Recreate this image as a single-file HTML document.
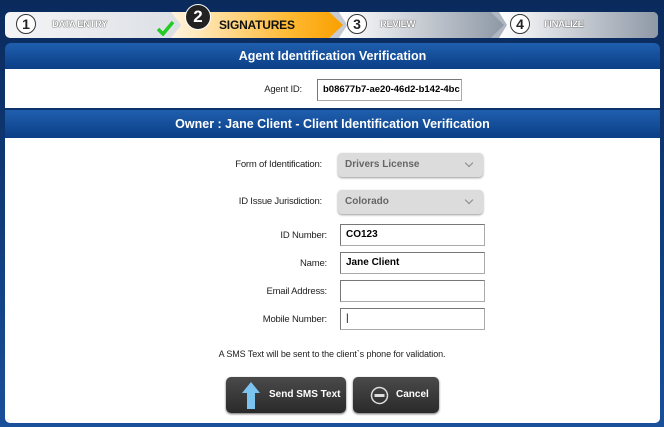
<!DOCTYPE html><html><head><style>
body{margin:0;width:664px;height:427px;background:linear-gradient(#0a2a5c,#123f80 60%,#1a4f9a);font-family:"Liberation Sans",sans-serif;position:relative;overflow:hidden}
.a{position:absolute}
.steps{left:5px;top:12px;width:653px;height:26px;border-radius:5px;background:linear-gradient(90deg,#f4f5f7,#9aa3b0);overflow:hidden}
.seg{position:absolute;top:0;height:26px}
.num{position:absolute;width:18px;height:18px;border:1.5px solid #333;border-radius:50%;background:#fff;font:bold 14px "Liberation Sans";text-align:center;line-height:18px;color:#222;top:2px}
.lab{position:absolute;top:7px;font:bold 9.5px "Liberation Sans";color:#fff;text-shadow:0 0 1px #333,0 0 1px #333;letter-spacing:-.4px}
.hdr{left:5px;width:655px;background:linear-gradient(#1f5fae,#0b3e86);color:#fff;font:bold 12.5px "Liberation Sans";text-align:center}
.white{left:5px;width:655px;background:#fff}
.lbl{position:absolute;font-size:9.5px;color:#222;text-align:right;letter-spacing:-.2px}
.inp{position:absolute;border:1px solid #aaa;border-top-color:#777;border-left-color:#777;background:#fff;font:bold 10px "Liberation Sans";line-height:20px;padding-left:5px;box-sizing:border-box;width:145px;height:22px}
.sel{position:absolute;width:145px;height:24px;border-radius:4px;background:#dcdcdc;box-shadow:0 1px 2px #999;font:bold 10px "Liberation Sans";color:#666;line-height:24px;padding-left:7px;box-sizing:border-box}
.sel:after{content:"";position:absolute;right:11px;top:7px;width:5px;height:5px;border-right:1px solid #888;border-bottom:1px solid #888;transform:rotate(45deg)}
.btn{position:absolute;top:377px;height:36px;border-radius:5px;background:linear-gradient(#4a4a4a,#2a2a2a);box-shadow:0 1px 2px #666;color:#fff;font:bold 10px "Liberation Sans";line-height:36px}
</style></head><body>
<div class="a steps">
 <div class="num" style="left:11px">1</div><div class="lab" style="left:47px">DATA ENTRY</div>
 <svg class="a" style="left:151px;top:8px" width="20" height="16"><path d="M2 9 L7 14 L17 2" stroke="#2c2" stroke-width="3.5" fill="none"/></svg>
 <div class="seg" style="left:166px;width:172px;background:linear-gradient(90deg,#fff5e0,#ffb830 70%,#f9a000);clip-path:polygon(0 0,92% 0,100% 50%,92% 100%,0 100%,6% 50%)"></div>
 <div class="lab" style="left:214px;top:6px;font-size:12px;color:#111;text-shadow:none;letter-spacing:-.2px">SIGNATURES</div>
 <div class="seg" style="left:334px;width:165px;background:linear-gradient(90deg,#fff,#8e98a6);clip-path:polygon(0 0,92% 0,100% 50%,92% 100%,0 100%,5% 50%)"></div>
 <div class="num" style="left:342px">3</div><div class="lab" style="left:375px">REVIEW</div>
 <div class="seg" style="left:494px;width:160px;background:linear-gradient(90deg,#fff,#8e98a6);clip-path:polygon(0 0,100% 0,100% 100%,0 100%,5% 50%)"></div>
 <div class="num" style="left:505px">4</div><div class="lab" style="left:539px">FINALIZE</div>
</div>
<div class="a" style="left:185px;top:4px;width:24px;height:24px;border-radius:50%;background:#222;border:1.5px solid #fff;color:#fff;font:bold 17px 'Liberation Sans';text-align:center;line-height:24px">2</div>
<div class="a hdr" style="top:43px;height:26px;line-height:26px;border-radius:6px 6px 0 0">Agent Identification Verification</div>
<div class="a white" style="top:69px;height:39px"></div>
<div class="lbl" style="left:200px;width:102px;top:84px">Agent ID:</div>
<div class="inp" style="left:317px;top:79px;overflow:hidden;white-space:nowrap;font-size:9.5px">b08677b7-ae20-46d2-b142-4bc</div>
<div class="a hdr" style="top:110px;height:28px;line-height:28px">Owner : Jane Client - Client Identification Verification</div>
<div class="a white" style="top:138px;height:285px;border-radius:0 0 5px 5px"></div>
<div class="lbl" style="left:150px;width:172px;top:159px">Form of Identification:</div>
<div class="sel" style="left:338px;top:153px">Drivers License</div>
<div class="lbl" style="left:150px;width:172px;top:196px">ID Issue Jurisdiction:</div>
<div class="sel" style="left:338px;top:190px">Colorado</div>
<div class="lbl" style="left:150px;width:177px;top:230px">ID Number:</div>
<div class="inp" style="left:340px;top:224px">CO123</div>
<div class="lbl" style="left:150px;width:177px;top:258px">Name:</div>
<div class="inp" style="left:340px;top:252px">Jane Client</div>
<div class="lbl" style="left:150px;width:177px;top:286px">Email Address:</div>
<div class="inp" style="left:340px;top:280px"></div>
<div class="lbl" style="left:150px;width:177px;top:314px">Mobile Number:</div>
<div class="inp" style="left:340px;top:308px;font-weight:normal">|</div>
<div class="a" style="left:0;width:664px;top:349px;text-align:center;font-size:9px;color:#222;letter-spacing:-.1px">A SMS Text will be sent to the client`s phone for validation.</div>
<div class="btn" style="left:226px;width:120px"><svg class="a" style="left:16px;top:5px" width="18" height="27"><path d="M9 0 L18 11 L13 11 L13 27 L5 27 L5 11 L0 11 Z" fill="#7cc4f0"/></svg><span style="position:absolute;left:43px">Send SMS Text</span></div>
<div class="btn" style="left:353px;width:86px"><svg class="a" style="left:17px;top:9px" width="19" height="19"><circle cx="9.5" cy="9.5" r="8" stroke="#ddd" stroke-width="1.5" fill="none"/><rect x="4.5" y="8" width="10" height="3" fill="#ddd"/></svg><span style="position:absolute;left:43px">Cancel</span></div>
</body></html>
